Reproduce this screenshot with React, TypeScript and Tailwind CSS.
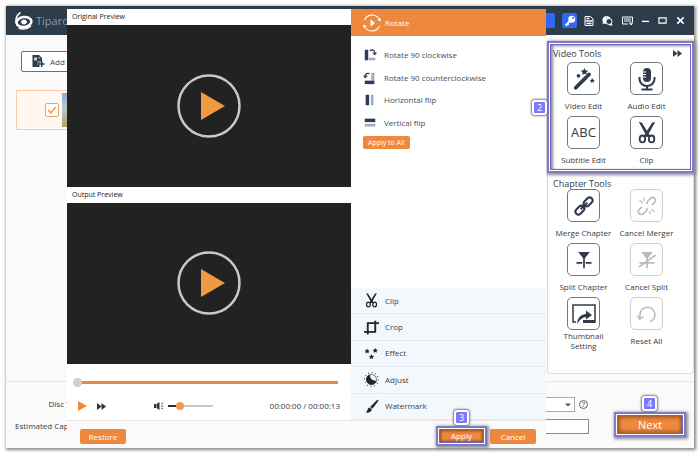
import type { ReactNode } from "react";

type Tool = {
  label: string;
  icon: ReactNode;
  disabled?: boolean;
};

const scissors = (
  <svg viewBox="0 0 24 24" className="size-full" fill="none" stroke="currentColor" strokeWidth="2">
    <path d="M4.500 1 6 1.500 14.500 15 12.500 15.500Z M19.500 1 18 1.500 9.500 15 11.500 15.500Z" fill="currentColor" strokeWidth="1.500" />
    <ellipse cx="7" cy="18.500" rx="3" ry="3.800" />
    <ellipse cx="17" cy="18.500" rx="3" ry="3.800" />
  </svg>
);

const videoTools: Tool[] = [
  {
    label: "Video Edit",
    icon: (
      <svg viewBox="0 0 24 24" className="size-[22px]" fill="currentColor">
        <path d="M3 21.500 14 10.500" stroke="currentColor" strokeWidth="4" strokeLinecap="round" />
        <path d="M16 8.500 17.500 7" stroke="currentColor" strokeWidth="4" strokeLinecap="round" />
        <path d="m12.500 0 1.200 2.500 2.800.4-2 2 .5 2.800-2.500-1.300L10 7.700l.5-2.800-2-2 2.800-.4z" />
        <circle cx="6" cy="8.500" r="2" />
        <path d="m21 11 .9 1.700 2 .3-1.500 1.400.4 2-1.800-1-1.800 1 .4-2-1.500-1.400 2-.3z" />
      </svg>
    ),
  },
  {
    label: "Audio Edit",
    icon: (
      <svg viewBox="0 0 24 24" className="size-6" fill="none" stroke="currentColor" strokeWidth="1.500">
        <rect x="8" y="1" width="8" height="14" rx="4" fill="currentColor" stroke="none" />
        <path d="M4.500 10v2a7.500 7 0 0 0 15 0v-2M12 19v3M6.500 22.500h11" strokeWidth="2" />
        <path d="M8 5h3M8 7.500h3M8 10h3" stroke="white" strokeWidth="1" />
      </svg>
    ),
  },
  { label: "Subtitle Edit", icon: <span className="text-[13px] leading-none font-medium">ABC</span> },
  { label: "Clip", icon: <span className="size-[22px]">{scissors}</span> },
];

const chapterTools: Tool[] = [
  {
    label: "Merge Chapter",
    icon: (
      <svg viewBox="0 0 24 24" className="size-5" fill="none" stroke="currentColor" strokeWidth="2.500">
        <g transform="rotate(-45 12 12)">
          <rect x="-1" y="8.500" width="12" height="7" rx="3.500" />
          <rect x="13" y="8.500" width="12" height="7" rx="3.500" />
        </g>
        <path d="m8 16 8-8" />
      </svg>
    ),
  },
  {
    label: "Cancel Merger",
    disabled: true,
    icon: (
      <svg viewBox="0 0 24 24" className="size-5" fill="none" stroke="currentColor" strokeWidth="2">
        <g transform="rotate(-45 12 12)">
          <path d="M7 8.500H2.500a3.500 3.500 0 0 0 0 7H7a3.500 3.500 0 0 0 3-2M17 15.500h4.500a3.500 3.500 0 0 0 0-7H17a3.500 3.500 0 0 0-3 2" />
        </g>
        <path d="M3 5l4 3M8 2l1 4M15 18l1 4M17 16l4 3" strokeWidth="1.500" />
      </svg>
    ),
  },
  {
    label: "Split Chapter",
    icon: (
      <svg viewBox="0 0 24 24" className="size-5" fill="none" stroke="currentColor" strokeWidth="2">
        <path d="M5 2.500h14L12 11z" fill="currentColor" stroke="none" />
        <path d="M12 9v13M3 15.500h7M14 15.500h7" />
      </svg>
    ),
  },
  {
    label: "Cancel Split",
    disabled: true,
    icon: (
      <svg viewBox="0 0 24 24" className="size-5" fill="none" stroke="currentColor" strokeWidth="2">
        <path d="M5 2.500h14L12 11z" fill="currentColor" stroke="none" />
        <path d="M12 9v13M3 15.500h18M2 20.500 22.500 6" />
      </svg>
    ),
  },
  {
    label: "Thumbnail Setting",
    icon: (
      <svg viewBox="0 0 24 20" className="h-5 w-6" fill="none" stroke="currentColor" strokeWidth="1.500">
        <path d="M4 18H1V1h22v17H12" />
        <path d="M11 17.500h12" strokeWidth="3" />
        <path d="M5 20c.5-6 3.500-9.500 9-10V6.500l6 4.500-6 4.500V13C10 13.500 7.500 16 5 20z" fill="currentColor" stroke="none" />
      </svg>
    ),
  },
  {
    label: "Reset All",
    disabled: true,
    icon: (
      <svg viewBox="0 0 24 24" className="size-5" fill="none" stroke="currentColor" strokeWidth="1.800">
        <path d="M3.500 17.500V13a9 9 0 1 1 12 8.500M0 14l3.500 4 4.500-3" />
      </svg>
    ),
  },
];

const rotateOptions: Tool[] = [
  {
    label: "Rotate 90 clockwise",
    icon: (
      <svg viewBox="0 0 16 16" className="size-[14px]">
        <path d="M2 2h4v12H2z" fill="#2f3d5c" />
        <path d="M6.500 11H14v3H6.500z" fill="#a3abc0" />
        <path d="M8 3c3-1.500 5-.5 5.500 2" fill="none" stroke="#2f3d5c" strokeWidth="1.500" />
        <path d="M10.500 5H16l-2.500 3.500z" fill="#2f3d5c" />
      </svg>
    ),
  },
  {
    label: "Rotate 90 counterclockwise",
    icon: (
      <svg viewBox="0 0 16 16" className="size-[14px]">
        <path d="M9.500 2H13v9H9.500z" fill="#a3abc0" />
        <path d="M2 11h11v4H2z" fill="#2f3d5c" />
        <path d="M7.500 3c-3-1-4.500 0-5 2.500" fill="none" stroke="#2f3d5c" strokeWidth="1.500" />
        <path d="M0 5h5.500L2.500 8.500z" fill="#2f3d5c" />
      </svg>
    ),
  },
  {
    label: "Horizontal flip",
    icon: (
      <svg viewBox="0 0 16 16" className="size-[14px]">
        <path d="M3 2h4v12H3z" fill="#2f3d5c" />
        <path d="M9 2h3v12H9z" fill="#a3abc0" />
      </svg>
    ),
  },
  {
    label: "Vertical flip",
    icon: (
      <svg viewBox="0 0 16 16" className="size-[14px]">
        <path d="M2 3h12v4H2z" fill="#2f3d5c" />
        <path d="M2 9h12v3H2z" fill="#a3abc0" />
      </svg>
    ),
  },
];

const sections: Tool[] = [
  { label: "Clip", icon: scissors },
  {
    label: "Crop",
    icon: (
      <svg viewBox="0 0 24 24" className="size-full" fill="none" stroke="currentColor" strokeWidth="3">
        <path d="M0 19h18V1M6 23V5h18" />
      </svg>
    ),
  },
  {
    label: "Effect",
    icon: (
      <svg viewBox="0 0 24 24" className="size-full" fill="currentColor">
        <path d="m5 4 1.300 2.600 2.900.4-2.100 2 .5 2.900L5 10.500l-2.600 1.400.5-2.900L.8 7l2.900-.4z" />
        <path d="m18 3 1.300 2.600 2.900.4-2.100 2 .5 2.900L18 9.500l-2.600 1.400.5-2.900-2.100-2 2.900-.4z" />
        <path d="m12 13 1.300 2.600 2.900.4-2.100 2 .5 2.900-2.600-1.400-2.600 1.400.5-2.900-2.100-2 2.900-.4z" />
      </svg>
    ),
  },
  {
    label: "Adjust",
    icon: (
      <svg viewBox="0 0 24 24" className="size-full" fill="none" stroke="currentColor">
        <circle cx="12" cy="12" r="8" />
        <path d="M9 4.500c0 6 4 10 10.500 10A8 8 0 1 1 9 4.500z" fill="currentColor" />
        <circle cx="12" cy="12" r="11" strokeWidth="2" strokeDasharray="1.200 4.560" />
      </svg>
    ),
  },
  {
    label: "Watermark",
    icon: (
      <svg viewBox="0 0 24 24" className="size-full" fill="currentColor">
        <path d="M22.500 1.500c1 .8.5 1.500-.5 3l-8.500 11-3.500-3 10-10c1-1 1.800-1.500 2.500-1z" />
        <path d="m9 13.500 3.500 3c-.5 4.500-5 6-10.500 5.500 3-1.500 2.500-2.500 3.500-5 .6-1.800 2-3 3.500-3.500z" />
      </svg>
    ),
  },
];

function StepBadge({ step }: { step: number }) {
  return (
    <span className="flex size-[15px] items-center justify-center rounded-[3px] border-2 border-white bg-[#7b78ff] text-[9px] leading-none text-white shadow-[0_0_2px_1px_#77777f]">
      {step}
    </span>
  );
}

function Highlight({ children }: { children: ReactNode }) {
  return (
    <div className="border-2 border-[#7f79c8] bg-white p-px shadow-[1px_1px_3px_1px_#8a8a92]">
      <div className="border border-[#6e68c4]">{children}</div>
    </div>
  );
}

function FastForward() {
  return (
    <svg viewBox="0 0 18 14" className="h-[7px] w-[9px]" fill="currentColor">
      <path d="M0 0l9 7-9 7zM9 0l9 7-9 7z" />
    </svg>
  );
}

function ToolGrid({ tools }: { tools: Tool[] }) {
  return (
    <div className="grid grid-cols-2 gap-y-px pr-3">
      {tools.map((tool) => (
        <button
          key={tool.label}
          disabled={tool.disabled}
          className="flex flex-col items-center text-[#3a3a44] group"
        >
          <span className="flex size-[33px] items-center justify-center rounded-[5px] border border-[#747885] bg-white text-[#303a4c] group-disabled:border-[#cfcfd2] group-disabled:text-[#b9bbc0]">
            {tool.icon}
          </span>
          <span className="flex h-5 items-center px-px pt-px leading-[10px]">{tool.label}</span>
        </button>
      ))}
    </div>
  );
}

function Preview({ title }: { title: string }) {
  return (
    <section className="flex min-h-0 flex-1 flex-col">
      <h2 className="h-4 shrink-0 bg-white px-[5px] text-[7px] leading-4 text-[#222]">{title}</h2>
      <div className="flex flex-1 items-center justify-center bg-[#222]">
        <button aria-label={`Play ${title}`}>
          <svg viewBox="0 0 64 64" className="size-16">
            <circle cx="32" cy="32" r="30.500" fill="none" stroke="#c8c8c8" strokeWidth="2.500" />
            <path d="M24 18v28l24-14z" fill="#ee9a40" />
          </svg>
        </button>
      </div>
    </section>
  );
}

function TitleBar() {
  return (
    <header className="flex h-[29px] shrink-0 items-center bg-[#2c3c4b] px-2 text-white">
      <svg viewBox="0 0 40 36" className="h-[18px] w-5" fill="none" stroke="white">
        <ellipse cx="20" cy="20" rx="15" ry="10" strokeWidth="5" transform="rotate(-8 20 20)" />
        <ellipse cx="20" cy="20" rx="5" ry="4" fill="white" strokeWidth="2" />
        <path d="M13 1C5 6 3 12 4 21" strokeWidth="3" />
        <path d="M9 32c8 3 17 3 25-4" strokeWidth="3" />
      </svg>
      <h1 className="ml-[2px] flex-1 text-[11px] leading-4 text-[#8d98a2]">Tipard</h1>
      <nav className="flex items-center text-white">
        <button aria-label="Register" className="h-[15px] w-5 rounded-[2px] bg-[#2f69f0]" />
        <button aria-label="Key" className="ml-[7px] flex size-[15px] items-center justify-center rounded-[2px] bg-[#2f69f0]">
          <svg viewBox="0 0 24 24" className="size-3" fill="none" stroke="currentColor" strokeWidth="4">
            <circle cx="15.500" cy="8.500" r="5" fill="currentColor" />
            <path d="M12 12 3 21M6 17l3 3" />
            <circle cx="18" cy="6" r="2" fill="#2f69f0" stroke="none" />
          </svg>
        </button>
        <button aria-label="File" className="ml-[7px]">
          <svg viewBox="0 0 20 20" className="size-[10px]" fill="none" stroke="currentColor" strokeWidth="2">
            <path d="M2 1h11l5 5v13H2z" />
            <path d="M5 5h6M3 10h14M5 15h10" strokeWidth="3" />
          </svg>
        </button>
        <button aria-label="Support" className="ml-2">
          <svg viewBox="0 0 22 20" className="h-[10px] w-[11px]" fill="currentColor">
            <path d="M9 0a8.500 8 0 0 0-7 12l-1 4 3-1 5 1z" />
            <path d="M9 0c4 0 7 2 8 5l-8 5z" />
            <circle cx="14" cy="11" r="6" fill="#2c3c4b" stroke="white" strokeWidth="2" />
            <path d="M14 19h7l-1-5z" />
          </svg>
        </button>
        <button aria-label="Menu" className="ml-[9px]">
          <svg viewBox="0 0 22 20" className="h-[10px] w-[11px]" fill="none" stroke="currentColor" strokeWidth="2">
            <path d="M12 16H1V2h20v11M4 6h14M4 10h14M15 14h6l-3 4z" />
          </svg>
        </button>
        <button aria-label="Minimize" className="ml-2">
          <svg viewBox="0 0 10 10" className="size-[9px]" stroke="currentColor" strokeWidth="1.500">
            <path d="M1 6h8" />
          </svg>
        </button>
        <button aria-label="Maximize" className="ml-2">
          <svg viewBox="0 0 10 10" className="size-[9px]" fill="none" stroke="currentColor" strokeWidth="1.300">
            <path d="M1 2h8v6H1z" />
          </svg>
        </button>
        <button aria-label="Close" className="mr-px ml-[9px]">
          <svg viewBox="0 0 10 10" className="size-[9px]" stroke="currentColor" strokeWidth="1.800">
            <path d="m1.500 1.500 7 7M8.500 1.500l-7 7" />
          </svg>
        </button>
      </nav>
    </header>
  );
}

function EditDialog() {
  return (
    <div role="dialog" aria-label="Edit video" className="absolute top-[3px] right-[148px] bottom-0 left-[61px] flex flex-col bg-white text-[#333]">
      <div className="flex min-h-0 flex-1">
        <div className="flex flex-1 flex-col">
          <Preview title="Original Preview" />
          <Preview title="Output Preview" />
          <div className="flex h-14 flex-col px-[6px]">
            <input
              type="range"
              aria-label="Position"
              defaultValue={0}
              className="mt-[17px] mr-[7px] h-[3px] appearance-none bg-[#ee883e] [&::-webkit-slider-thumb]:size-[9px] [&::-webkit-slider-thumb]:appearance-none [&::-webkit-slider-thumb]:rounded-full [&::-webkit-slider-thumb]:bg-[#cfcfcf]"
            />
            <div className="mt-4 flex h-3 items-center px-[5px] text-[#30343c]">
              <button aria-label="Play" className="text-[#ee883e]">
                <svg viewBox="0 0 10 10" className="size-[10px]" fill="currentColor">
                  <path d="M0 0l9 5-9 5z" />
                </svg>
              </button>
              <button aria-label="Fast forward" className="ml-[9px]">
                <FastForward />
              </button>
              <button aria-label="Mute" className="ml-12">
                <svg viewBox="0 0 20 16" className="h-2 w-[10px]" fill="currentColor">
                  <path d="M0 4h4v8H0zM5 4l6-4v16l-6-4z" />
                  <path d="m14 4 4-2M14 8h5M14 12l4 2" stroke="currentColor" strokeWidth="1.500" />
                </svg>
              </button>
              <input
                type="range"
                aria-label="Volume"
                defaultValue={22}
                className="ml-1 h-[2px] w-[45px] appearance-none bg-linear-to-r from-[#333] from-25% to-[#c8c8c8] to-25% [&::-webkit-slider-thumb]:size-2 [&::-webkit-slider-thumb]:appearance-none [&::-webkit-slider-thumb]:rounded-full [&::-webkit-slider-thumb]:bg-[#f39a52]"
              />
              <span className="ml-auto text-[#333a48]">00:00:00 / 00:00:13</span>
            </div>
          </div>
        </div>

        <div className="flex w-[195px] flex-col text-[#444d68]">
          <button className="flex h-[27px] items-center gap-1 bg-[#ee883e] pl-3 text-white">
            <svg viewBox="0 0 24 24" className="size-[18px]" fill="none" stroke="currentColor" strokeWidth="1.500">
              <path d="M2 8a11 11 0 0 1 19-2M22 16A11 11 0 0 1 3 18" />
              <path d="M19 8l5 2-1-5zM5 16l-5-2 1 5zM10 7v10l6-5z" fill="currentColor" stroke="none" />
            </svg>
            Rotate
          </button>
          <div className="flex-1 px-3 pt-2">
            <div className="grid h-[90px] grid-rows-4">
              {rotateOptions.map((option) => (
                <button key={option.label} className="flex items-center gap-[7px]">
                  {option.icon}
                  {option.label}
                </button>
              ))}
            </div>
            <button className="mt-[2px] h-[13px] rounded-[2px] bg-[#ee883e] px-[5px] text-[7px] leading-[13px] text-white">
              Apply to All
            </button>
          </div>
          <div className="grid h-[132px] grid-rows-5 bg-[#f3f8fd]">
            {sections.map((section) => (
              <button key={section.label} className="flex items-center gap-[6px] border-b border-[#e6e9ed] pl-[13px] text-[#3c4048]">
                <span className="size-[15px] text-[#22262e]">{section.icon}</span>
                {section.label}
              </button>
            ))}
          </div>
        </div>
      </div>

      <div className="flex h-7 items-center gap-[3px] border-t border-[#e6e6e6] bg-[#fafafa] pt-1 pr-[10px] pb-px pl-[13px]">
        <button className="mr-auto h-[15px] w-[46px] rounded-[2px] bg-[#ee883e] leading-[15px] text-white">Restore</button>
        <div className="relative">
          <Highlight>
            <button className="block h-3 w-[43px] bg-[#ee883e] leading-3 text-white shadow-[inset_0_0_3px_1px_#8a4a20]">
              Apply
            </button>
          </Highlight>
          <div className="absolute -top-4 left-[18px]">
            <StepBadge step={3} />
          </div>
        </div>
        <button className="h-[15px] w-[46px] rounded-[2px] bg-[#ee883e] leading-[15px] text-white">Cancel</button>
      </div>
    </div>
  );
}

export default function App() {
  return (
    <div className="h-screen bg-white p-[6px] font-['Open_Sans','Noto_Sans',sans-serif] text-[8px] leading-[10px]">
      <div className="relative flex h-full flex-col bg-[#fafafa] shadow-[1px_1px_3px_1px_#888]">
        <TitleBar />

        <div className="flex min-h-0 flex-1 border-b border-[#e4e4e4]">
          <main className="flex-1 px-[10px] pt-4">
            <button className="ml-[5px] flex h-[21px] w-24 items-center gap-[5px] rounded-[2px] border border-[#65717d] bg-white pl-[10px] whitespace-pre text-[#3a4350]">
              <svg viewBox="0 0 24 26" className="h-[13px] w-[13px]" fill="#2c3c4b">
                <path d="M0 0h13l6 6v9h-5v9H0z" />
                <path d="M13 18h11M18.500 12v12" stroke="#2c3c4b" strokeWidth="3" />
                <path d="M3 5h6v6H3zM12 3l4 4h-4z" fill="#c9d0d6" />
                <path d="M11 20V13h6" stroke="white" strokeWidth="1" fill="none" />
              </svg>
              Add File
            </button>
            <div className="mt-[18px] flex h-10 items-center gap-[3px] border border-[#fbcba6] bg-[#fff7f1] pl-7">
              <label className="grid size-[14px] place-items-center">
                <input
                  type="checkbox"
                  aria-label="Select video"
                  defaultChecked
                  className="col-start-1 row-start-1 size-[14px] appearance-none rounded-[2px] border border-[#f0a068] bg-white"
                />
                <svg viewBox="0 0 12 12" className="col-start-1 row-start-1 size-[10px]" fill="none" stroke="#ee883e" strokeWidth="1.500">
                  <path d="m1.500 6 3 3.500 6-7" />
                </svg>
              </label>
              <span className="h-[34px] w-14 bg-linear-to-b from-[#8fa8dc] via-[#b9c8c8] via-45% to-[#b0a060]" />
            </div>
          </main>

          <aside className="flex w-[147px] flex-col pt-[6px] pb-[7px] text-[#3a3a44]">
            <div className="relative">
              <Highlight>
                <div className="pl-px shadow-[inset_2px_1px_3px_#888]">
                  <div className="flex h-[17px] items-center justify-between pr-2 pl-px text-[9px]">
                    <h2>Video Tools</h2>
                    <button aria-label="Collapse tools">
                      <FastForward />
                    </button>
                  </div>
                  <ToolGrid tools={videoTools} />
                </div>
              </Highlight>
              <div className="absolute top-[59px] -left-[15px] z-10">
                <StepBadge step={2} />
              </div>
            </div>
            <section className="flex-1 rounded-b-[4px] border border-t-0 border-[#dcdcdf] bg-white pt-[5px] pr-[3px] pl-1">
              <h2 className="h-[11px] pl-px text-[9px] leading-[11px]">Chapter Tools</h2>
              <ToolGrid tools={chapterTools} />
            </section>
          </aside>
        </div>

        <footer className="flex h-[66px] shrink-0 justify-between px-2 text-[#3a3a3a]">
          <div className="grid grid-cols-[72px_495px] content-center items-center gap-x-2 gap-y-[7px]">
            <label htmlFor="disc-type" className="text-right">Disc Type:</label>
            <div className="flex items-center gap-1 pr-px">
              <span className="relative flex-1">
                <select id="disc-type" className="block h-[15px] w-full appearance-none border border-[#aaa] bg-white px-1 leading-[13px]">
                  <option>BD-25 (25G)</option>
                </select>
                <svg viewBox="0 0 8 4" className="pointer-events-none absolute top-[6px] right-1 h-1 w-[6px]" fill="#555">
                  <path d="M0 0h8L4 4z" />
                </svg>
              </span>
              <button aria-label="Help" className="size-[9px] rounded-full border border-[#666] text-[7px] leading-[7px]">?</button>
            </div>
            <label htmlFor="capacity" className="pl-px whitespace-nowrap">Estimated Capacity:</label>
            <input id="capacity" readOnly className="h-[15px] w-full border border-[#8a8a8a] bg-white" />
          </div>
          <div className="relative mb-[11px] self-end">
            <Highlight>
              <button className="block h-[17px] w-16 bg-[#ee883e] text-[11px] leading-[17px] text-white shadow-[inset_0_0_4px_1px_#8a4a20]">
                Next
              </button>
            </Highlight>
            <div className="absolute -top-4 left-7">
              <StepBadge step={4} />
            </div>
          </div>
        </footer>

        <EditDialog />
      </div>
    </div>
  );
}
